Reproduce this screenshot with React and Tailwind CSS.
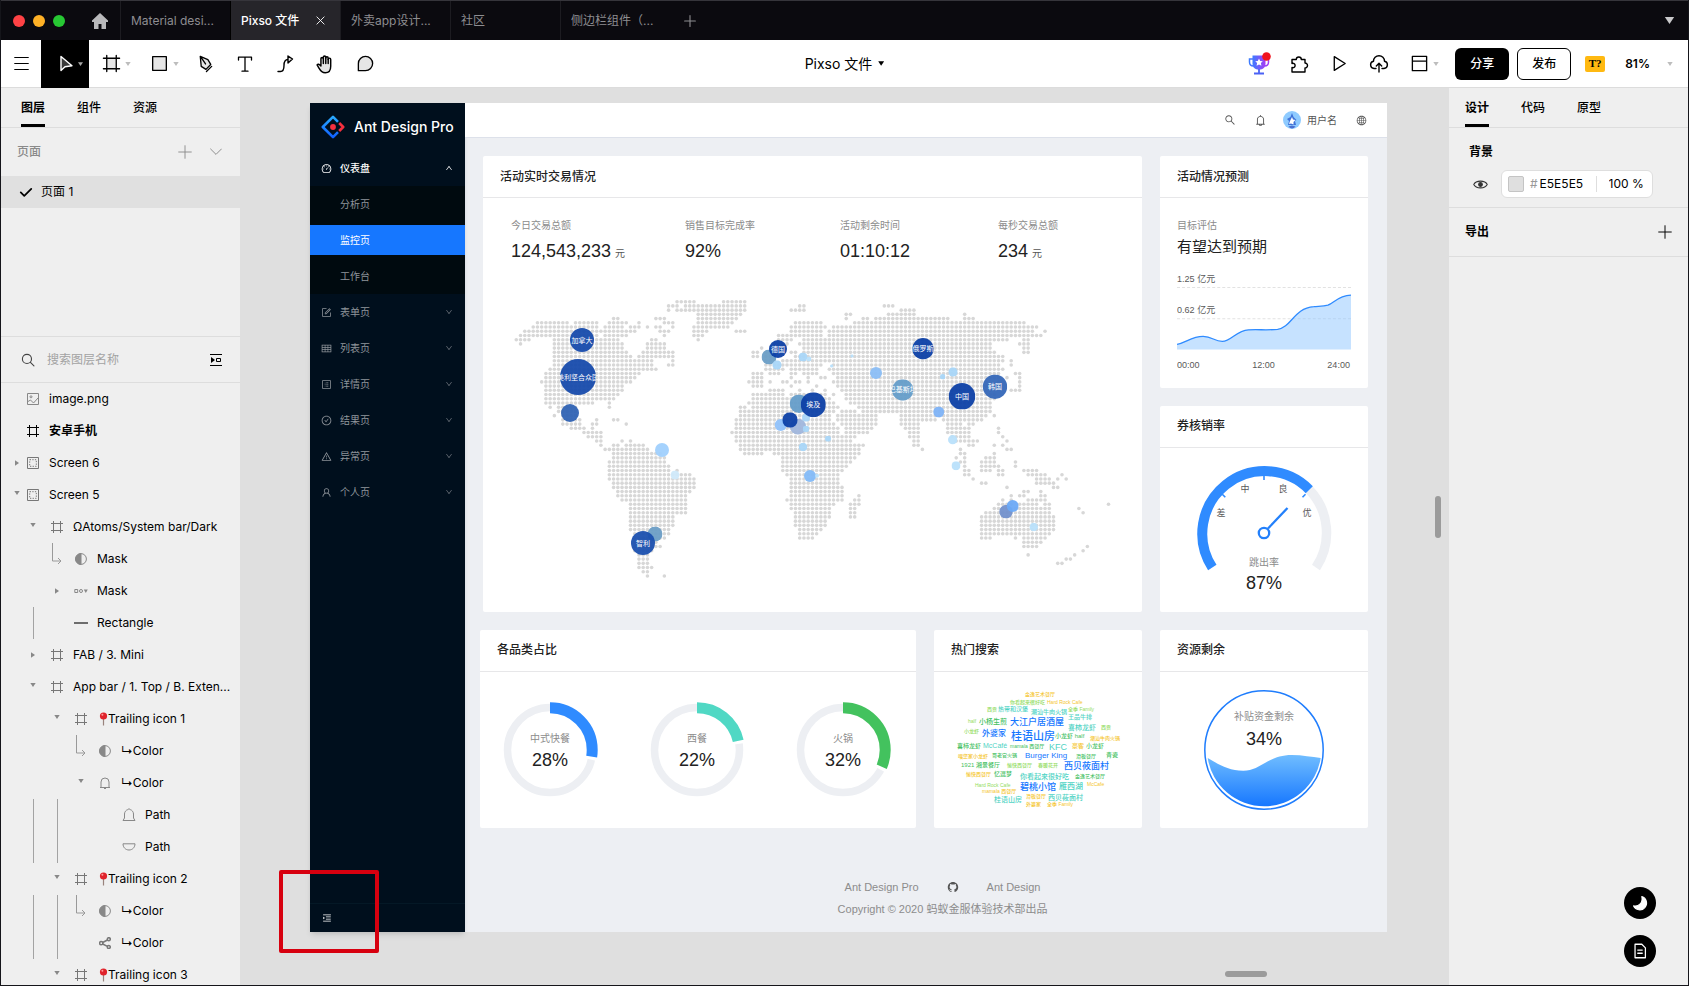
import { useState } from "react";
import {
  AiOutlineBell,
  AiOutlineCheckCircle,
  AiOutlineDashboard,
  AiOutlineDown,
  AiOutlineForm,
  AiOutlineGithub,
  AiOutlineGlobal,
  AiOutlineMenuUnfold,
  AiOutlineProfile,
  AiOutlineSearch,
  AiOutlineTable,
  AiOutlineUp,
  AiOutlineUser,
  AiOutlineWarning,
} from "react-icons/ai";

const Caret = ({ className = "w-[7px] h-[5px]" }) => (
  <svg viewBox="0 0 8 6" className={`shrink-0 ${className}`} fill="currentColor">
    <path d="M0 0h8L4 6z" />
  </svg>
);

const Icon = ({ size = 20, children, className = "", strokeWidth = 1.4 }) => (
  <svg
    width={size}
    height={size}
    viewBox="0 0 20 20"
    fill="none"
    stroke="currentColor"
    strokeWidth={strokeWidth}
    strokeLinecap="round"
    strokeLinejoin="round"
    className={`shrink-0 ${className}`}
  >
    {children}
  </svg>
);

/* ---------- window bar ---------- */

const fileTabs = [
  { title: "Material desi..." },
  { title: "Pixso 文件", active: true },
  { title: "外卖app设计..." },
  { title: "社区" },
  { title: "侧边栏组件（..." },
];

const TitleBar = () => (
  <header className="h-10 shrink-0 flex items-center bg-[#0b0a0f] border-t border-[#36353b] text-[#8e8d91] text-xs">
    <div className="flex gap-2 pl-3">
      <span className="w-3 h-3 rounded-full bg-[#ff4245]" />
      <span className="w-3 h-3 rounded-full bg-[#ffb126]" />
      <span className="w-3 h-3 rounded-full bg-[#27c833]" />
    </div>
    <button aria-label="主页" className="ml-[26px] mr-[11px] text-[#b9b9bb]">
      <svg width="18" height="18" viewBox="0 0 18 18" fill="currentColor">
        <path d="M9 1 1 8.4V10h2v7h4.5v-5h3v5H15v-7h2V8.4z" />
      </svg>
    </button>
    <nav className="flex self-stretch">
      {fileTabs.map((tab) => (
        <button
          key={tab.title}
          className={
            tab.active
              ? "w-[110px] px-2.5 flex items-center justify-between bg-[#26252a] text-white font-medium border-l border-black whitespace-nowrap"
              : "w-[110px] px-2.5 flex items-center border-l border-[#1d1c21] whitespace-nowrap"
          }
        >
          {tab.title}
          {tab.active && (
            <Icon size={9} strokeWidth={2} className="mr-[5px]">
              <path d="M2 2l16 16M18 2L2 18" />
            </Icon>
          )}
        </button>
      ))}
    </nav>
    <button aria-label="新建" className="ml-3.5">
      <Icon size={12} strokeWidth={1.8}>
        <path d="M10 1v18M1 10h18" />
      </Icon>
    </button>
    <Caret className="ml-auto mr-[13px] w-[11px] h-[7px] text-[#c9c9cb]" />
  </header>
);

/* ---------- toolbar ---------- */

const Tool = ({ label, caret, children }) => (
  <button aria-label={label} className="relative w-10 h-10 flex items-center justify-center">
    {children}
    {caret && <Caret className="absolute right-0 top-[18px] w-[6px] h-[4px] text-[#bdbdbd]" />}
  </button>
);

const Toolbar = () => (
  <div className="h-12 shrink-0 flex items-center bg-white border-b border-[#dcdcdc] relative">
    <button aria-label="菜单" className="w-10 flex justify-center">
      <Icon size={17} strokeWidth={1.3}>
        <path d="M2 3h16M2 10h16M2 17h16" />
      </Icon>
    </button>
    <button
      aria-label="移动"
      className="self-stretch w-12 bg-black text-white flex items-center justify-center gap-0.5 -mb-px"
    >
      <Icon size={20} className="ml-2">
        <path d="M5 2.5v14l4-3.8 7-1z" fill="#3a3a3a" />
      </Icon>
      <Caret className="w-[5px] h-[4px] text-[#a8a8a8]" />
    </button>
    <div className="flex ml-0.5">
      <Tool label="画板" caret>
        <Icon size={19}>
          <path d="M5.5 4.5h9v11h-9z" fill="#e6e6e6" stroke="none" />
          <path d="M5 1.5v17M15 1.5v17M1.5 4.5h17M1.5 15.5h17" />
        </Icon>
      </Tool>
      <div className="w-2" />
      <Tool label="矩形" caret>
        <Icon size={19}>
          <path d="M2.8 2.8h14.4v14.4H2.8z" fill="#e6e6e6" />
        </Icon>
      </Tool>
      <div className="w-1.5" />
      <Tool label="钢笔">
        <Icon size={19}>
          <path d="M4.5 2.5l1 10.5 5 3.2 5-5.2-3-5zM5 3l5 7.5" fill="#e6e6e6" />
          <path d="M11 18.5l5.5-5.5" />
        </Icon>
      </Tool>
      <Tool label="文本">
        <Icon strokeWidth={1.3}>
          <path d="M3.5 6V3.2h13V6M10 3.2v14M7 17.2h6" />
        </Icon>
      </Tool>
      <Tool label="连接线">
        <Icon>
          <path d="M3 17.5h2.5c3 0 3.5-2.500 3.5-6s.5-6 4-6" />
          <path d="M13 2v7l4.5-4z" fill="#e6e6e6" />
        </Icon>
      </Tool>
      <Tool label="抓手">
        <Icon size={22} strokeWidth={1.3}>
          <path
            d="M6.3 10.5V5.2a1.1 1.1 0 0 1 2.2 0V3.8a1.1 1.1 0 0 1 2.2 0v.7a1.1 1.1 0 0 1 2.2 0v1.300a1.1 1.1 0 0 1 2.3 0V12c0 4-1.8 6-5 6-3 0-4.2-1.500-5.700-4.200L2.800 10.800c.7-1 2-.8 3.500 1z"
            fill="#e6e6e6"
          />
          <path d="M8.5 5v4.5M10.7 4.5v5M12.9 5.5v4" />
        </Icon>
      </Tool>
      <Tool label="评论">
        <Icon size={19}>
          <path d="M2.5 17.5V10A7.5 7.5 0 1 1 10 17.5z" fill="#e6e6e6" />
        </Icon>
      </Tool>
    </div>

    <button className="absolute left-1/2 -translate-x-1/2 flex items-center gap-1.5 text-sm">
      Pixso 文件 <Caret className="w-[6px] h-[5px]" />
    </button>

    <div className="ml-auto flex items-center">
      <Tool label="奖励">
        <svg width="24" height="24" viewBox="0 0 24 24" fill="none">
          <defs>
            <linearGradient id="cup" x1="0" y1="0" x2="1" y2="0">
              <stop offset="0" stopColor="#3d7bff" />
              <stop offset="1" stopColor="#a63cf5" />
            </linearGradient>
          </defs>
          <path d="M6 7H2.5v3c0 3 1.5 4 4 4M17 7h4.5v3c0 3-1.5 4-4 4" stroke="url(#cup)" strokeWidth="1.5" />
          <path d="M5.5 3.5h13v8c0 4-2.5 6-6.5 6s-6.5-2-6.5-6z" fill="url(#cup)" />
          <path d="M12 17v4M7 21.5h10" stroke="#4b62f5" strokeWidth="1.8" />
          <path d="m12 6.500 1.200 2.400 2.600.3-1.900 1.900.5 2.600-2.400-1.200-2.400 1.200.5-2.600-1.900-1.900 2.600-.3z" fill="#fff" />
          <circle cx="19.500" cy="4.500" r="4.300" fill="#f0141e" />
        </svg>
      </Tool>
      <Tool label="插件">
        <Icon>
          <path d="M3 5.5h4.300a2.500 2.500 0 1 1 5 0H16V9a2.500 2.500 0 1 1 0 5v4H3v-4.500a2.200 2.200 0 1 0 0-4z" />
        </Icon>
      </Tool>
      <Tool label="演示">
        <Icon size={19}>
          <path d="M4.500 2.800l11.500 7.200-11.500 7.200z" />
        </Icon>
      </Tool>
      <Tool label="上传">
        <Icon>
          <path d="M7 14.5H5a3.7 3.7 0 0 1-.5-7.3 5.5 5.5 0 0 1 11 0 3.7 3.7 0 0 1-.5 7.3h-2M10 18v-8.500M7.300 12 10 9.300l2.700 2.700" />
        </Icon>
      </Tool>
      <Tool label="布局" caret>
        <Icon size={19}>
          <path d="M2.500 2.500h15v15h-15zM2.500 7.500h15" />
        </Icon>
      </Tool>
      <button className="ml-4 w-[54px] h-8 rounded-md bg-black text-white text-xs font-medium">分享</button>
      <button className="ml-2 w-[54px] h-8 rounded-md border border-black text-xs font-medium">发布</button>
      <span className="ml-3.5 w-5 h-4 rounded-xs bg-[#ffb911] flex items-center justify-center font-['Liberation_Serif',serif] font-bold text-[11px]">
        T?
      </span>
      <button className="ml-5 mr-[15px] flex items-center gap-[17px] text-xs font-semibold">
        81% <Caret className="w-[6px] h-[4px] text-[#bdbdbd]" />
      </button>
    </div>
  </div>
);

/* ---------- layers panel ---------- */

const HashIcon = ({ dark }) => (
  <svg width="12" height="12" viewBox="0 0 12 12" fill="none" stroke={dark ? "#000" : "#777"} strokeWidth="1">
    <path d="M2.5 0v12M9.5 0v12M0 2.5h12M0 9.5h12" />
  </svg>
);

const layerIcons = {
  image: (
    <svg width="12" height="12" viewBox="0 0 12 12" fill="none" stroke="#888">
      <path d="M.5.5h11v11H.5zM1 8.5 3.5 7l3 3 4.500-5" />
      <circle cx="4" cy="3.8" r="1" />
    </svg>
  ),
  frameDark: <HashIcon dark />,
  frame: <HashIcon />,
  screen: (
    <svg width="12" height="12" viewBox="0 0 12 12" fill="none" stroke="#777">
      <path d="M.5.5h11v11H.5z" />
      <path d="M2.700 2.700h6.600v6.600H2.700z" strokeDasharray="1.300 1.300" />
    </svg>
  ),
  mask: (
    <svg width="12" height="12" viewBox="0 0 12 12" fill="none" stroke="#888">
      <circle cx="6" cy="6" r="5.4" />
      <path d="M6 .6a5.4 5.4 0 0 0 0 10.8z" fill="#888" />
    </svg>
  ),
  group: (
    <svg width="14" height="12" viewBox="0 0 14 12" fill="none" stroke="#888">
      <path d="M.8 4.5h2.900v3H.8z" />
      <circle cx="7" cy="6" r="1.5" />
      <path d="M9.8 4.5h4L11.8 8z" fill="#888" stroke="none" />
    </svg>
  ),
  line: (
    <svg width="14" height="12" viewBox="0 0 14 12" stroke="#555" strokeWidth="1.7">
      <path d="M0 6h14" />
    </svg>
  ),
  bell: (
    <svg width="12" height="14" viewBox="0 0 12 14" fill="none" stroke="#888">
      <path d="M1 11.5h10M2 11.5V6a4 4 0 0 1 8 0v5.5M5 12.5h2" />
    </svg>
  ),
  bellTop: (
    <svg width="14" height="14" viewBox="0 0 14 14" fill="none" stroke="#888">
      <path d="M1 12.5h12l-1.500-2.500V6c0-2-1.500-4-3.300-4.400L7 .7l-1.200.9C4 2 2.500 4 2.500 6v4z" />
    </svg>
  ),
  bellBottom: (
    <svg width="14" height="8" viewBox="0 0 14 8" fill="none" stroke="#888">
      <path d="M1 .8h12c0 3.500-2.500 6.200-6 6.200S1 4.300 1 .8z" />
    </svg>
  ),
  share: (
    <svg width="12" height="12" viewBox="0 0 12 12" fill="none" stroke="#777" strokeWidth="1.5">
      <circle cx="2.200" cy="6.200" r="1.600" />
      <circle cx="9.800" cy="2.200" r="1.500" />
      <circle cx="9.800" cy="10" r="1.500" />
      <path d="m3.700 5.500 4.700-2.500M3.700 7l4.700 2.400" />
    </svg>
  ),
};

// cells: "" blank, "|" guide, "L" elbow, "v" open, ">" closed
const layers = [
  { cells: [], icon: "image", name: "image.png" },
  { cells: [], icon: "frameDark", name: "安卓手机", bold: true },
  { root: ">", cells: [], icon: "screen", name: "Screen 6" },
  { root: "v", cells: [], icon: "screen", name: "Screen 5" },
  { cells: ["v"], icon: "frame", name: "ΩAtoms/System bar/Dark" },
  { cells: ["", "L"], icon: "mask", name: "Mask" },
  { cells: ["", ">"], icon: "group", name: "Mask" },
  { cells: ["|", ""], icon: "line", name: "Rectangle" },
  { cells: [">"], icon: "frame", name: "FAB / 3. Mini" },
  { cells: ["v"], icon: "frame", name: "App bar / 1. Top / B. Exten..." },
  { cells: ["", "v"], icon: "frame", name: "Trailing icon 1", pin: true },
  { cells: ["", "", "L"], icon: "mask", name: "↳Color" },
  { cells: ["", "", "v"], icon: "bell", name: "↳Color" },
  { cells: ["|", "|", "", ""], icon: "bellTop", name: "Path" },
  { cells: ["|", "|", "", ""], icon: "bellBottom", name: "Path" },
  { cells: ["", "v"], icon: "frame", name: "Trailing icon 2", pin: true },
  { cells: ["|", "|", "L"], icon: "mask", name: "↳Color" },
  { cells: ["|", "|", ""], icon: "share", name: "↳Color" },
  { cells: ["", "v"], icon: "frame", name: "Trailing icon 3", pin: true },
];

const Cell = ({ type }) => {
  if (type === "|") return <span className="w-px h-8 bg-[#a3a3a3]" />;
  if (type === "L")
    return (
      <svg width="10" height="32" viewBox="0 0 10 32" fill="none" stroke="#999">
        <path d="M.5 0v18H9M6 15l3 3-3 3" />
      </svg>
    );
  if (type === "v") return <Caret className="w-[6px] h-[4px] mb-1 text-[#888]" />;
  if (type === ">") return <Caret className="w-[6px] h-[4px] -rotate-90 text-[#888]" />;
  return null;
};

const Pin = () => (
  <svg width="9" height="14" viewBox="0 0 9 14" className="ml-0.5 shrink-0">
    <path d="M4.500 6v7.500" stroke="#99837d" strokeWidth="1.200" />
    <circle cx="4.500" cy="4" r="3.600" fill="#e0232b" />
    <circle cx="3.400" cy="2.800" r="1" fill="#ff9c9c" />
  </svg>
);

const LayersPanel = () => (
  <aside className="w-[239px] shrink-0 bg-[#efefef] text-xs flex flex-col overflow-hidden">
    <div className="h-10 shrink-0 flex gap-8 pl-5 border-b border-[#dddddd]">
      <button className="pt-1 font-semibold border-b-3 border-black">图层</button>
      <button className="pt-1 font-medium border-b-3 border-transparent">组件</button>
      <button className="pt-1 font-medium border-b-3 border-transparent">资源</button>
    </div>
    <div className="h-12 shrink-0 flex items-center pl-4 pr-[18px] text-[#8a8a8a]">
      <span className="font-medium">页面</span>
      <button aria-label="添加页面" className="ml-auto">
        <Icon size={14} strokeWidth={1.3}>
          <path d="M10 1v18M1 10h18" />
        </Icon>
      </button>
      <button aria-label="折叠" className="ml-[18px]">
        <Icon size={12} strokeWidth={1.6}>
          <path d="M1 5l9 9 9-9" />
        </Icon>
      </button>
    </div>
    <div className="h-8 shrink-0 flex items-center pl-[18px] gap-2 bg-[#e0e0e0]">
      <Icon size={14} strokeWidth={2.5}>
        <path d="M2.500 10.500l5 5 10-10" />
      </Icon>
      页面 1
    </div>
    <div className="h-32 shrink-0" />
    <div className="h-[47px] shrink-0 flex items-center border-y border-[#dddddd] pl-5 pr-[18px]">
      <Icon size={14} strokeWidth={1.6} className="text-[#444]">
        <circle cx="8.500" cy="8.500" r="6.500" />
        <path d="m13.500 13.500 5 5" />
      </Icon>
      <input
        aria-label="搜索图层名称"
        placeholder="搜索图层名称"
        className="ml-3 flex-1 min-w-0 outline-none placeholder:text-[#a3a3a3]"
      />
      <button aria-label="折叠图层">
        <svg width="12" height="12" viewBox="0 0 12 12" fill="none" stroke="#000">
          <path d="M0 .5h12M0 11.5h12M6.5 4.5h4v3h-4z" />
          <path d="M1 3l4 3-4 3z" fill="#000" stroke="none" />
        </svg>
      </button>
    </div>
    <ul>
      {layers.map((layer, i) => (
        <li key={i} className="h-8 flex items-center pl-3 whitespace-nowrap">
          <span className="w-2 flex justify-center shrink-0">
            <Cell type={layer.root} />
          </span>
          {layer.cells.map((c, j) => (
            <span key={j} className="w-6 flex justify-center shrink-0">
              <Cell type={c} />
            </span>
          ))}
          <span className="w-6 mr-1 flex justify-center shrink-0">{layerIcons[layer.icon]}</span>
          {layer.pin && <Pin />}
          <span className={layer.bold ? "font-bold" : ""}>{layer.name}</span>
        </li>
      ))}
    </ul>
  </aside>
);

/* ---------- design panel ---------- */

const DesignPanel = () => {
  const [hex, setHex] = useState("E5E5E5");
  const [alpha, setAlpha] = useState("100 %");

  return (
    <aside className="w-[239px] shrink-0 bg-[#efefef] text-xs flex flex-col">
      <div className="h-10 flex gap-8 pl-4 border-b border-[#dddddd]">
        <button className="pt-1 font-semibold border-b-3 border-black">设计</button>
        <button className="pt-1 font-medium border-b-3 border-transparent">代码</button>
        <button className="pt-1 font-medium border-b-3 border-transparent">原型</button>
      </div>
      <section className="h-20 border-b border-[#dddddd] pl-5 pt-4">
        <h2 className="font-semibold leading-4">背景</h2>
        <div className="flex items-center mt-2.5 pl-1">
          <button aria-label="显示背景">
            <Icon size={15} className="text-[#333]">
              <path d="M1 10c3-6 15-6 18 0-3 6-15 6-18 0z" />
              <circle cx="10" cy="10" r="2.5" fill="currentColor" />
            </Icon>
          </button>
          <div className="ml-[13px] w-[152px] h-7 flex items-center bg-white rounded-md border border-[#dedede] pl-1.5">
            <span className="w-4 h-4 rounded-xs bg-[#dfdfdf] border border-[#c4c4c4]" />
            <span className="ml-1.5 text-[#999]">#</span>
            <input
              aria-label="背景颜色"
              value={hex}
              onChange={(e) => setHex(e.target.value)}
              className="w-[56px] outline-none ml-0.5"
            />
            <input
              aria-label="不透明度"
              value={alpha}
              onChange={(e) => setAlpha(e.target.value)}
              className="w-[52px] border-l border-[#dedede] pl-3 outline-none"
            />
          </div>
        </div>
      </section>
      <section className="h-[49px] border-b border-[#dddddd] pl-4 pr-4 flex items-center justify-between">
        <h2 className="font-semibold">导出</h2>
        <button aria-label="添加导出">
          <Icon size={14} strokeWidth={1.4}>
            <path d="M10 1v18M1 10h18" />
          </Icon>
        </button>
      </section>
    </aside>
  );
};

/* ---------- dashboard artboard ---------- */

const menu = [
  { title: "表单页", icon: AiOutlineForm },
  { title: "列表页", icon: AiOutlineTable },
  { title: "详情页", icon: AiOutlineProfile },
  { title: "结果页", icon: AiOutlineCheckCircle },
  { title: "异常页", icon: AiOutlineWarning },
  { title: "个人页", icon: AiOutlineUser },
];

const Sidebar = () => (
  <nav className="w-[155px] shrink-0 bg-[#000f1d] text-[#8f959b] text-[10px] flex flex-col shadow-md">
    <div className="h-[47px] flex items-center gap-[9px] pl-[11px] text-white text-sm font-medium font-[Inter,sans-serif] whitespace-nowrap">
      <svg width="24" height="24" viewBox="0 0 24 24" fill="none" strokeWidth="2.6" strokeLinejoin="round" className="shrink-0">
        <defs>
          <linearGradient id="antBlue" x1="0" y1="0" x2="0" y2="1">
            <stop offset="0" stopColor="#29a9ff" />
            <stop offset="1" stopColor="#1161ff" />
          </linearGradient>
        </defs>
        <path d="M17 6.800 12 1.800 1.800 12 12 22.200l5-5" stroke="url(#antBlue)" />
        <path d="m18.200 8 4 4-4 4" stroke="#f5303f" />
        <circle cx="12" cy="12" r="2.900" fill="#f5303f" />
      </svg>
      Ant Design Pro
    </div>
    <button className="h-9 flex items-center pl-[11px] pr-3 text-white font-medium">
      <AiOutlineDashboard size={11} />
      <span className="ml-2">仪表盘</span>
      <AiOutlineUp size={8} className="ml-auto" />
    </button>
    <div className="bg-[#000a0f]">
      <button className="w-full h-9 pl-[30px] text-left">分析页</button>
      <button className="block w-full h-[30px] my-[3px] pl-[30px] text-left bg-[#1677ff] text-white">监控页</button>
      <button className="w-full h-9 pl-[30px] text-left">工作台</button>
    </div>
    {menu.map(({ title, icon: MenuIcon }) => (
      <button key={title} className="h-9 flex items-center pl-[11px] pr-3">
        <MenuIcon size={11} />
        <span className="ml-2">{title}</span>
        <AiOutlineDown size={8} className="ml-auto text-[#6b737b]" />
      </button>
    ))}
    <button aria-label="展开菜单" className="mt-auto h-[29px] pl-3 border-t border-[#041826] text-white">
      <AiOutlineMenuUnfold size={10} />
    </button>
  </nav>
);

const Card = ({ title, className = "", children }) => (
  <section className={`bg-white rounded-xs ${className}`}>
    <h3 className="h-[42px] flex items-center px-[17px] border-b border-[#e7e7e9] text-xs font-medium text-[#222]">
      {title}
    </h3>
    {children}
  </section>
);

// columns covered by land on every row of the dotted map
const land = [
  "38-42 49-54",
  "36-38 40-54 67-68 87-89",
  "36 38-54 65-68 91-94",
  "43-53 78-79 88-94 106",
  "23-24 33-35 43-52 78 82-83 85-102 106-108",
  "5-12 14-19 22-26 29 35-37 43-51 66-72 80-120",
  "4-19 21-25 27-29 31 33-34 37 42-50 65-73 75-123",
  "2-20 21-28 34-36 42-45 52-54 65-72 74-122 125",
  "1-19 21-26 35 42-44 62-72 74-124",
  "0-3 9-24 32-33 43 62-65 68-116 120-121",
  "1 9-25 31-35 61-64 67-112 119-121",
  "9-25 31-35 58 61-63 68-112 120-121",
  "9-26 30-37 56-57 59 65-66 68-113 120-121",
  "9-27 29-37 56-57 59-60 66-115",
  "9-32 37 59-61 63-115 117",
  "9-32 36-37 59-72 75-114 117",
  "8-33 59-63 65-71 74-115",
  "7-29 56-58 60-62 65-66 68-71 75-114 118-119",
  "7-28 56-58 65 69 72-73 76-114 116 119",
  "6-27 55-58 60 63-64 66-67 69 75-111 114 119",
  "7-25 56-58 65 71 76-113 119",
  "7-25 60-63 67 70 73 77-112 117-119",
  "7-24 56-63 65-73 75 78-113",
  "7-23 56-74 78-113",
  "7-18 22 55-75 79-112",
  "8 10-14 22 53-54 56-76 81-112",
  "10-14 53-75 77-80 82-112",
  "9 11-14 53-74 76-85 91-111 113",
  "11-15 19 23-24 52-74 76-85 91-99 101-110",
  "11-15 18-19 26 52-75 77-85 91-95 102-105 107-108",
  "13-16 18 52-76 78-84 92-95 102-107 114",
  "16-20 51-52 53-76 78-83 93-95 102-107 114",
  "17-20 52-80 93-95 103-107 115",
  "19-20 25 27 52-79 94-95 104-109 116",
  "20 23-24 26-30 53-82 94-95 107-108 113 115",
  "21-31 53-81 96 105 116-117",
  "23-34 54-58 61-81 105-106 113",
  "23-35 63-80 104 106 111-113",
  "22-35 63-79 105-106 110-113 118",
  "22-36 63-78 106 110-114 118",
  "22-36 38 63-77 106-107 110-112 114-115 120-123",
  "22-38 39-41 64-76 106-107 114-115 121-125 129",
  "22-42 65-76 108 123-126 128 130",
  "23-42 65-76 110-111 123-127",
  "23-42 65-77 116 127-128",
  "24-41 65-77 120-121 124",
  "24-40 65-77 81 117 119-120 124-125",
  "25-40 64-77 80-81 115 117 121-125",
  "27-40 65-75 79-81 114-117 119-123 125-126 140",
  "27-40 65-74 79-80 113-126 133",
  "27-40 66-74 79-80 111-126 134",
  "27-37 66-74 79-80 110-127",
  "27-37 66-73 110-127",
  "27-37 66-73 110-127",
  "27-36 67-72 110-127",
  "28-36 67-71 110-126",
  "28-35 67-70 110-112 118 120-125",
  "28-33 120-124",
  "28-34 120-123 135",
  "28-32 134",
  "29-31 121 132",
  "29-31 130-131",
  "29-31 128-129",
  "29-32",
  "30-31",
  "31 35",
];

const dots = land.flatMap((row, r) =>
  row.split(" ").flatMap((run) => {
    const [from, to = from] = run.split("-").map(Number);
    return Array.from({ length: to - from + 1 }, (_, i) => [33.3 + (from + i) * 4.23, 30.7 + r * 4.22]);
  })
);

const bubbles = [
  { x: 99, y: 69, r: 12, fill: "#1549ab", name: "加拿大" },
  { x: 95, y: 106, r: 18, fill: "#1549ab", name: "美利坚合众国" },
  { x: 87, y: 142, r: 9, fill: "#2f62b4" },
  { x: 179, y: 179, r: 7, fill: "#9fcffd" },
  { x: 192, y: 204, r: 4.5, fill: "#cfe9fa" },
  { x: 172, y: 263, r: 7.5, fill: "#6a9dc6" },
  { x: 160, y: 272, r: 12, fill: "#1a4fae", name: "智利" },
  { x: 286, y: 86, r: 7.5, fill: "#6a9dc6" },
  { x: 294, y: 94, r: 4.7, fill: "#a8d6f8" },
  { x: 295, y: 78, r: 9, fill: "#0b3fa6", name: "德国" },
  { x: 320, y: 86, r: 4.5, fill: "#a8d6f8" },
  { x: 326, y: 88, r: 2.5, fill: "#b9e0fb" },
  { x: 369, y: 85, r: 1.7, fill: "#b9e0fb" },
  { x: 348.7, y: 95, r: 1.7, fill: "#b9e0fb" },
  { x: 316, y: 132.7, r: 9.3, fill: "#649cc9" },
  { x: 297.7, y: 154, r: 6, fill: "#8fc1fb" },
  { x: 315, y: 155.7, r: 8, fill: "#9fb6dc" },
  { x: 323, y: 146.7, r: 4, fill: "#a8d6f8" },
  { x: 323, y: 158, r: 3.3, fill: "#a8d6f8" },
  { x: 307, y: 149, r: 7.7, fill: "#0b3fa6" },
  { x: 330.3, y: 133.7, r: 12.5, fill: "#0b3fa6", name: "埃及" },
  { x: 320, y: 176, r: 4.3, fill: "#a8d6f8" },
  { x: 345, y: 167.7, r: 3, fill: "#a8d6f8" },
  { x: 327, y: 205, r: 6, fill: "#82baf8" },
  { x: 334, y: 204.7, r: 2, fill: "#b9e0fb" },
  { x: 393, y: 102, r: 6, fill: "#8abdf5" },
  { x: 419.7, y: 119, r: 10.7, fill: "#649cc9", name: "巴基斯坦" },
  { x: 440, y: 77.7, r: 10.7, fill: "#0b3fa6", name: "俄罗斯" },
  { x: 470, y: 101, r: 4.7, fill: "#a8d6f8" },
  { x: 459.7, y: 105.7, r: 2.7, fill: "#a8d6f8" },
  { x: 479, y: 125.3, r: 13.3, fill: "#0b3fa6", name: "中国" },
  { x: 512, y: 115.7, r: 12.2, fill: "#3366b8", name: "韩国" },
  { x: 455.7, y: 141, r: 5.5, fill: "#7db2f6" },
  { x: 469.7, y: 168.7, r: 4.7, fill: "#b9e0fb" },
  { x: 473, y: 194.7, r: 4.5, fill: "#b9e0fb" },
  { x: 523, y: 240.7, r: 6.8, fill: "#7291cc" },
  { x: 529.7, y: 235, r: 6, fill: "#6aa8f5" },
  { x: 550.7, y: 256, r: 4.3, fill: "#b9e0fb" },
];

const WorldMap = () => (
  <svg viewBox="0 0 659 340" className="block w-full">
    {dots.map(([x, y], i) => (
      <circle key={i} cx={x} cy={y} r="1.8" fill="#d7d7d7" />
    ))}
    {bubbles.map((b, i) => (
      <svg key={i} x={b.x - b.r} y={b.y - b.r} width={b.r * 2} height={b.r * 2} overflow="hidden">
        <circle cx={b.r} cy={b.r} r={b.r} fill={b.fill} fillOpacity="0.94" />
        {b.name && (
          <text x={b.r} y={b.r} fill="#fff" fontSize="7" textAnchor="middle" dominantBaseline="central">
            {b.name}
          </text>
        )}
      </svg>
    ))}
  </svg>
);

const stats = [
  { label: "今日交易总额", value: "124,543,233", unit: "元" },
  { label: "销售目标完成率", value: "92%" },
  { label: "活动剩余时间", value: "01:10:12" },
  { label: "每秒交易总额", value: "234", unit: "元" },
];

const AreaChart = () => (
  <svg viewBox="0 0 173 100" className="block w-full mt-2.5" fontSize="9" fill="#595959">
    <text x="0" y="12">1.25 亿元</text>
    <text x="0" y="43">0.62 亿元</text>
    <path d="M0 17.5h173M0 48.5h173" stroke="#e2e2e2" strokeDasharray="3 2" />
    <path
      d="M0 74C9 72 15 66 26 66c9 0 11 5 19 5 9 0 14-11 26-11.500 10-.5 20 .5 29-.5 14-2 16-21 36-22.500 5-.5 9 0 14-1.500 6-2 10-9.500 23-10v54H0z"
      fill="#8ec5ff"
      fillOpacity="0.5"
    />
    <path
      d="M0 74C9 72 15 66 26 66c9 0 11 5 19 5 9 0 14-11 26-11.500 10-.5 20 .5 29-.5 14-2 16-21 36-22.500 5-.5 9 0 14-1.500 6-2 10-9.500 23-10"
      fill="none"
      stroke="#2f8bff"
      strokeWidth="1.3"
    />
    <text x="0" y="97">00:00</text>
    <text x="86" y="97" textAnchor="middle">12:00</text>
    <text x="172" y="97" textAnchor="end">24:00</text>
  </svg>
);

const Gauge = () => (
  <svg viewBox="0 2 208 164" className="block w-full" textAnchor="middle" dominantBaseline="central">
    <path d="M149.300 43.700A62.500 62.500 0 0 1 156 121.500" fill="none" stroke="#edeff3" strokeWidth="9.5" />
    <path d="M52.300 121.500A62.500 62.500 0 0 1 149.300 43.700" fill="none" stroke="#2f8bff" strokeWidth="10" />
    <path d="M104 29v5M62.300 48.300l3 3M145.500 48.300l-3 3" stroke="#2f8bff" strokeWidth="1.6" />
    <circle cx="104" cy="87" r="5.2" fill="none" stroke="#2380fb" strokeWidth="2.3" />
    <path d="M108 82.500l19.500-20.500" stroke="#2380fb" strokeWidth="2.3" />
    <g fontSize="9" fill="#595959">
      <text x="61" y="67">差</text>
      <text x="85" y="43">中</text>
      <text x="123" y="43">良</text>
      <text x="147" y="67">优</text>
    </g>
    <text x="104" y="116" fontSize="10" fill="#8c8c8c">跳出率</text>
    <text x="104" y="137" fontSize="18" fill="#222">87%</text>
  </svg>
);

const categories = [
  { name: "中式快餐", value: 28, color: "#2f8bff" },
  { name: "西餐", value: 22, color: "#50d8c4" },
  { name: "火锅", value: 32, color: "#43c25e" },
];

const Donut = ({ name, value, color }) => (
  <svg width="100" height="100" viewBox="0 0 100 100" fill="none" textAnchor="middle" dominantBaseline="central">
    <circle cx="50" cy="50" r="42.5" stroke="#edeff3" strokeWidth="7.5" />
    <g transform="rotate(-90 50 50)">
      <circle cx="50" cy="50" r="42.2" pathLength="100" stroke="#fff" strokeWidth="12" strokeDasharray={`${value + 0.7} 100`} />
      <circle cx="50" cy="50" r="42.2" pathLength="100" stroke={color} strokeWidth="11" strokeDasharray={`${value - 0.5} 100`} />
    </g>
    <text x="50" y="38" fontSize="10" fill="#8c8c8c">{name}</text>
    <text x="50" y="60" fontSize="18" fill="#222">{`${value}%`}</text>
  </svg>
);

const BLUE = "#1677ff";
const TEAL = "#4fd3c4";
const GREEN = "#45bf62";
const LIME = "#93dc62";
const GOLD = "#f5c52c";

const words = [
  ["金逸艺术餐厅", 91, 22, 5, GOLD],
  ["你看起来很好吃", 76, 30, 5, LIME],
  ["Hard Rock Cafe", 113, 30, 5, GOLD],
  ["西贡", 53, 37, 5, LIME],
  ["热带和汉堡", 64, 37, 6, TEAL],
  ["潮汕牛肉火锅", 97, 40, 6, TEAL],
  ["全季 Family", 134, 37, 5, LIME],
  ["half", 34, 49, 5, LIME],
  ["小杨生煎", 45, 49, 7, GREEN],
  ["大江户居酒屋", 76, 50, 9, BLUE],
  ["王品牛排", 134, 45, 6, TEAL],
  ["小龙虾", 30, 59, 5, LIME],
  ["外婆家", 48, 61, 8, BLUE],
  ["喜柿龙虾", 134, 55, 7, TEAL],
  ["西贡", 167, 55, 5, LIME],
  ["桂语山房", 77, 64, 11, BLUE],
  ["小龙虾 half", 121, 64, 6, GREEN],
  ["潮汕牛肉火锅", 156, 66, 5, GOLD],
  ["喜柿龙虾", 23, 74, 6, GREEN],
  ["McCafé", 49, 73, 7, TEAL],
  ["mamala 西餐厅", 76, 74, 5, GREEN],
  ["KFC", 115, 75, 9, TEAL],
  ["豪客", 138, 74, 6, GOLD],
  ["小龙虾", 152, 74, 6, GREEN],
  ["喂您家小龙虾", 24, 84, 5, GOLD],
  ["哥老官火锅", 58, 83, 5, GREEN],
  ["Burger King", 91, 83, 8, BLUE],
  ["滑板餐厅", 142, 84, 5, GREEN],
  ["青瓷", 172, 83, 6, GREEN],
  ["1921 湘景餐厅", 27, 93, 6, GREEN],
  ["愉快西餐厅", 73, 93, 5, LIME],
  ["春暖花开", 104, 93, 5, LIME],
  ["西贝莜面村", 130, 94, 9, BLUE],
  ["愉快西餐厅", 32, 102, 5, GOLD],
  ["忆逗梦", 60, 102, 6, GREEN],
  ["你看起来很好吃", 86, 104, 7, TEAL],
  ["金逸艺术餐厅", 141, 104, 5, GREEN],
  ["Hard Rock Cafe", 41, 113, 5, LIME],
  ["碧桃小馆", 86, 115, 9, BLUE],
  ["雁西湖", 125, 114, 8, TEAL],
  ["McCafe", 153, 112, 5, GOLD],
  ["mamala 西餐厅", 48, 119, 5, GOLD],
  ["桂语山房", 60, 127, 7, TEAL],
  ["滑板餐厅", 92, 124, 5, GOLD],
  ["西贝莜面村", 114, 125, 7, TEAL],
  ["外婆家", 92, 132, 5, GOLD],
  ["全季 Family", 113, 132, 5, GOLD],
];

const WordCloud = () => (
  <svg viewBox="0 0 208 156" className="block w-full font-medium" dominantBaseline="central">
    {words.map(([text, x, y, size, color], i) => (
      <text key={i} x={x} y={y} fontSize={size} fill={color}>
        {text}
      </text>
    ))}
  </svg>
);

const LiquidFill = () => (
  <svg viewBox="0 0 208 156" className="block w-full" textAnchor="middle" dominantBaseline="central">
    <defs>
      <linearGradient id="water" x1="0" y1="0" x2="0" y2="1">
        <stop offset="0" stopColor="#70bdff" />
        <stop offset="1" stopColor="#1677ff" />
      </linearGradient>
    </defs>
    <circle cx="104" cy="78" r="59.2" fill="none" stroke="#1f7dfd" strokeWidth="1.5" />
    <path
      d="M47.700 86C58 92 68 98.700 83.300 98.700 101 98.700 108 83 131.700 83c11 0 20 2 29 3a57.200 57.200 0 0 1-113 0z"
      fill="url(#water)"
    />
    <text x="104" y="44" fontSize="10" fill="#8c8c8c">补贴资金剩余</text>
    <text x="104" y="67" fontSize="18" fill="#222">34%</text>
  </svg>
);

const Avatar = () => (
  <svg width="18" height="18" viewBox="0 0 18 18" className="ml-4">
    <circle cx="9" cy="9" r="9" fill="#8fcbff" />
    <path d="M9 2l1.500 4 3 3-1.500 1 1 4H5l1-4-2-2 3.500-2z" fill="#3f72d8" />
    <path d="M9 6l1 2.500 2.500.5-2 2v2.500L8 12.500l-2 .5 1-3z" fill="#fff" />
    <path d="M5.500 15.500c2 2.500 5 2.500 7 0l-3.500-1z" fill="#4a6fd0" />
  </svg>
);

const Artboard = () => (
  <div className="flex flex-1 bg-[#edeff3] font-['Liberation_Sans','Noto_Sans_CJK_SC',sans-serif] text-[#222]">
    <Sidebar />
    <div className="flex-1 min-w-0">
      <div className="h-[35px] flex items-center justify-end pr-5 bg-white border-b border-[#dde1ea] text-[10px] text-[#555]">
        <AiOutlineSearch size={12} />
        <AiOutlineBell size={13} className="ml-[18px]" />
        <Avatar />
        <span className="ml-1.5 mr-[19px]">用户名</span>
        <AiOutlineGlobal size={11} />
      </div>

      <div className="flex gap-[18px] pl-[18px] pr-[19px] pt-[18px]">
        <Card title="活动实时交易情况" className="flex-1 min-w-0">
          <div className="grid grid-cols-[174fr_155fr_158fr_144fr] pl-7 pt-5 pb-[3px]">
            {stats.map((s) => (
              <div key={s.label}>
                <p className="text-[10px] leading-4 text-[#8c8c8c]">{s.label}</p>
                <p className="mt-[3px] text-lg leading-7 text-[#222]">
                  {s.value}
                  {s.unit && <span className="ml-1 text-[10px] text-[#555]">{s.unit}</span>}
                </p>
              </div>
            ))}
          </div>
          <WorldMap />
        </Card>
        <div className="w-[208px] shrink-0 flex flex-col gap-[18px]">
          <Card title="活动情况预测">
            <div className="px-[17px] pt-5 pb-[17px]">
              <p className="text-[10px] leading-4 text-[#8c8c8c]">目标评估</p>
              <p className="text-[15px] leading-[26px]">有望达到预期</p>
              <AreaChart />
            </div>
          </Card>
          <Card title="券核销率">
            <Gauge />
          </Card>
        </div>
      </div>

      <div className="flex gap-[18px] pl-[15px] pr-[19px] pt-[18px]">
        <Card title="各品类占比" className="flex-1 min-w-0">
          <div className="flex justify-between pl-5 pr-[23px] pt-7">
            {categories.map((c) => (
              <Donut key={c.name} {...c} />
            ))}
          </div>
        </Card>
        <Card title="热门搜索" className="w-[208px] shrink-0">
          <WordCloud />
        </Card>
        <Card title="资源剩余" className="w-[208px] shrink-0">
          <LiquidFill />
        </Card>
      </div>

      <footer className="pt-12 pb-3 pl-[33px] text-center text-[11px] leading-[22px] text-[#8c8c8c]">
        <div className="flex items-center justify-center gap-7">
          <a href="#pro">Ant Design Pro</a>
          <a href="#github" aria-label="GitHub">
            <AiOutlineGithub size={12} className="text-[#555]" />
          </a>
          <a href="#antd">Ant Design</a>
        </div>
        <p>Copyright © 2020 蚂蚁金服体验技术部出品</p>
      </footer>
    </div>
  </div>
);

const App = () => (
  <div className="h-screen flex flex-col overflow-hidden border border-t-0 border-[#15151a] bg-[#dfdfdf] text-black font-[Inter,'Noto_Sans_CJK_SC',sans-serif]">
    <TitleBar />
    <Toolbar />
    <div className="flex flex-1 min-h-0">
      <LayersPanel />
      <main className="relative flex-1 min-w-0 overflow-hidden flex items-start pt-[15px] pl-[70px] pr-[62px]">
        <Artboard />
        {/* selection frame around the collapse button */}
        <div className="absolute left-[39px] top-[782px] w-[100px] h-[83px] border-4 border-[#d7000f] rounded-xs" />
        <div className="absolute right-[8px] top-[408px] w-1.5 h-[42px] rounded-full bg-[#9b9b9b]" />
        <div className="absolute right-[182px] bottom-[8px] w-[42px] h-1.5 rounded-full bg-[#9b9b9b]" />
      </main>
      <DesignPanel />
    </div>
    <div className="fixed right-[33px] bottom-[19px] flex flex-col gap-4">
      <button aria-label="深色模式" className="w-8 h-8 rounded-full bg-black text-white flex items-center justify-center">
        <Icon size={18} strokeWidth={1.2}>
          <path d="M12 2.800a7.600 7.600 0 1 1-9.200 10.400c6 1.300 10.700-3.700 9.200-10.400z" fill="currentColor" />
        </Icon>
      </button>
      <button aria-label="文档" className="w-8 h-8 rounded-full bg-black text-white flex items-center justify-center">
        <Icon size={18}>
          <path d="M4.500 2.500h7.500l4 4v11H4.500zM7.500 9h5M7.500 12.500h5" />
        </Icon>
      </button>
    </div>
  </div>
);

export default App;
